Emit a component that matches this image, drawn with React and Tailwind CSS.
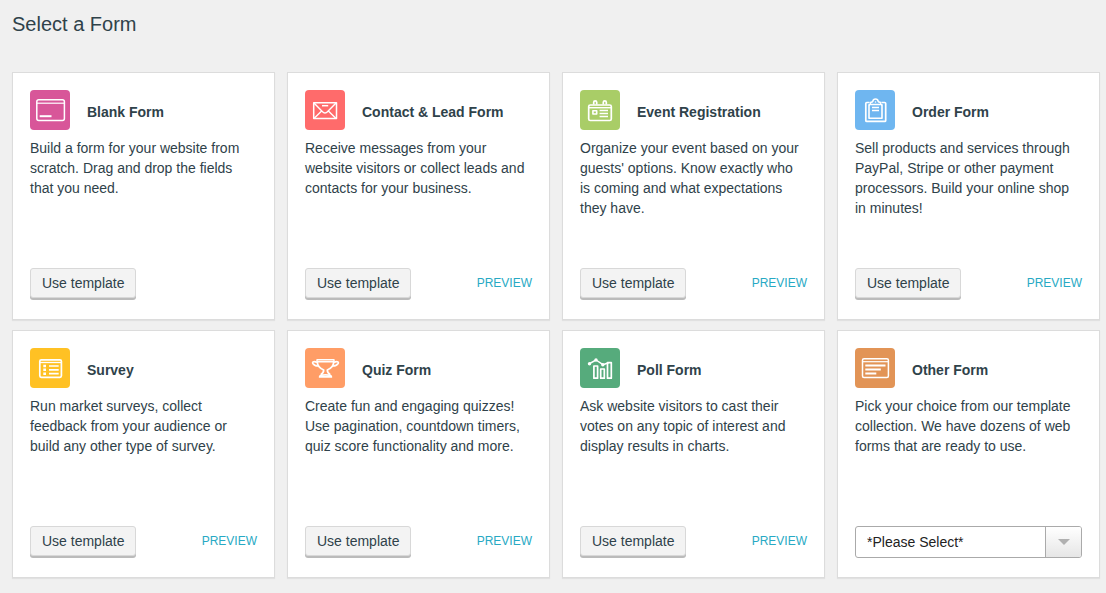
import React from "react";

function Icon({ color, children }) {
  return (
    <svg
      viewBox="0 0 40 40"
      className="size-10 shrink-0"
      fill="none"
      stroke="#fff"
      strokeWidth="1.7"
      strokeLinejoin="round"
      aria-hidden="true"
    >
      <rect width="40" height="40" rx="4" fill={color} stroke="none" />
      {children}
    </svg>
  );
}

const BlankIcon = () => (
  <Icon color="#d85699">
    <rect x="6.8" y="9.8" width="27.6" height="20.6" rx="2" strokeWidth="1.5" />
    <path d="M7 13.2h27" strokeWidth="1.2" />
    <path d="M9.7 26.200h11.800" strokeWidth="2" />
  </Icon>
);

const ContactIcon = () => (
  <Icon color="#ff6b6b">
    <rect x="8.7" y="12.8" width="22.8" height="15.800" strokeWidth="1.500" />
    <path d="M9 13l8.300 8.500c1.700 2 3.700 2 5.400 0L31 13M9 28.400l7.600-7.400M31 28.400l-7.600-7.400" strokeWidth="1.400" />
    <path d="M17 15.700h6.200" strokeWidth="1.500" />
  </Icon>
);

const EventIcon = () => (
  <Icon color="#a9cd67">
    <rect x="8.700" y="15" width="22.600" height="15.500" rx="1.600" />
    <path d="M9 17.700h22" strokeWidth="1.400" />
    <path d="M13.700 14.500v-2.200a1.500 1.500 0 0 1 3 0v2.200M23.300 14.500v-2.200a1.500 1.500 0 0 1 3 0v2.200" />
    <rect x="12.900" y="20.800" width="3.800" height="3.200" strokeWidth="1.600" />
    <path d="M19.600 20.500h8.400M19.600 23.500h8.400M19.600 26.500h8.400" strokeWidth="1.500" />
  </Icon>
);

const OrderIcon = () => (
  <Icon color="#6fb6f0">
    <path d="M14.500 12.500h-2.700a1 1 0 0 0-1 1v16.900a1 1 0 0 0 1 1h17.900a1 1 0 0 0 1-1V13.500a1 1 0 0 0-1-1h-3.200" />
    <path d="M15 14.900h-1v13.300h13V14.900h-1" strokeWidth="1.600" />
    <path d="M15.400 14.500v-2l2.300-.8c.6-3.600 5-3.600 5.600 0l2.300.8v2z" strokeWidth="1.500" />
    <circle cx="20.500" cy="12" r=".8" fill="#fff" stroke="none" />
    <path d="M17 17.600h7M17 20.600h7" strokeWidth="1.500" />
  </Icon>
);

const SurveyIcon = () => (
  <Icon color="#ffc124">
    <rect x="9.800" y="11.800" width="21.600" height="17.500" rx="1.500" />
    <path d="M10 14.500h21" strokeWidth="1.300" />
    <path d="M13.300 18h2.700M13.300 21.800h2.700M13.300 25.700h2.700" strokeWidth="2.400" />
    <path d="M19 18h9.700M19 21.800h9.700M19 25.700h9.700" strokeWidth="1.700" />
  </Icon>
);

const QuizIcon = () => (
  <Icon color="#ff9d66">
    <path d="M12 11.800h17v2H12z" strokeWidth="1.400" />
    <path d="M12.300 13.800c0 4.500 2.700 6.700 6.400 8.200 0 2.200-1 3.600-3 4.800M28.700 13.800c0 4.500-2.700 6.700-6.400 8.200 0 2.200 1 3.600 3 4.800" />
    <path d="M12 14.400c-2.600-1.300-5-.7-4.200 1 1 2 3.200 2.700 5.700 2.600M29 14.400c2.600-1.300 5-.7 4.200 1-1 2-3.200 2.700-5.700 2.600" />
    <path d="M14.600 28.900c0-1.700 2.300-2 5.900-2s5.900.3 5.900 2z" />
  </Icon>
);

const PollIcon = () => (
  <Icon color="#56ab7c">
    <rect x="13.900" y="18" width="3.700" height="12.200" />
    <rect x="20.700" y="21" width="3.600" height="9.200" />
    <rect x="27.500" y="14.600" width="3.800" height="15.600" />
    <path d="M9.500 15.700L16 12l7 4.700 5.500-2" strokeWidth="1.500" />
    <g fill="#fff" stroke="none">
      <circle cx="9.500" cy="15.700" r="1.700" />
      <circle cx="16" cy="12" r="1.700" />
      <circle cx="22.800" cy="16.700" r="1.700" />
    </g>
  </Icon>
);

const OtherIcon = () => (
  <Icon color="#e29456">
    <rect x="7.500" y="10.700" width="25.900" height="18.700" rx="1.500" strokeWidth="1.500" />
    <path d="M8 13.700h25" strokeWidth="1.200" />
    <path d="M10.300 17.500h20.200M10.300 21.500h15.500M10.300 25.500h11" strokeWidth="1.900" />
  </Icon>
);

const forms = [
  { title: "Blank Form", icon: BlankIcon, action: "template", text: "Build a form for your website from scratch. Drag and drop the fields that you need." },
  { title: "Contact & Lead Form", icon: ContactIcon, action: "preview", text: "Receive messages from your website visitors or collect leads and contacts for your business." },
  { title: "Event Registration", icon: EventIcon, action: "preview", text: "Organize your event based on your guests' options. Know exactly who is coming and what expectations they have." },
  { title: "Order Form", icon: OrderIcon, action: "preview", text: "Sell products and services through PayPal, Stripe or other payment processors. Build your online shop in minutes!" },
  { title: "Survey", icon: SurveyIcon, action: "preview", text: "Run market surveys, collect feedback from your audience or build any other type of survey." },
  { title: "Quiz Form", icon: QuizIcon, action: "preview", text: "Create fun and engaging quizzes! Use pagination, countdown timers, quiz score functionality and more." },
  { title: "Poll Form", icon: PollIcon, action: "preview", text: "Ask website visitors to cast their votes on any topic of interest and display results in charts." },
  { title: "Other Form", icon: OtherIcon, action: "select", text: "Pick your choice from our template collection. We have dozens of web forms that are ready to use." },
];

function TemplateSelect() {
  return (
    <div className="mt-auto grid h-8 w-full grid-cols-[1fr_36px] overflow-hidden rounded-[3px] border border-[#aaa] bg-white">
      <select
        aria-label="Template"
        className="col-span-2 col-start-1 row-start-1 h-full w-full appearance-none bg-transparent pl-[11px] text-sm text-[#222]"
      >
        <option>*Please Select*</option>
      </select>
      <span className="pointer-events-none col-start-2 row-start-1 flex items-center justify-center border-l border-[#aaa] bg-linear-to-b from-white to-[#e6e6e6]">
        <svg viewBox="0 0 12 6" className="h-1.5 w-3" aria-hidden="true">
          <path d="M0 0h12L6 6z" fill="#b0b0b0" />
        </svg>
      </span>
    </div>
  );
}

function CardActions({ preview }) {
  return (
    <div className="mt-auto flex items-center justify-between pb-0.5">
      <button
        type="button"
        className="h-[30px] rounded-[3px] border border-[#d8d8d8] bg-[#f3f3f3] px-[11px] text-sm shadow-[0_2px_0_#bbb]"
      >
        Use template
      </button>
      {preview && (
        <a href="#preview" className="text-xs text-[#27a9c4]">
          PREVIEW
        </a>
      )}
    </div>
  );
}

function Card({ form }) {
  const FormIcon = form.icon;
  return (
    <article className="flex min-h-[248px] flex-col border border-[#dcdcdc] bg-white px-[17px] pt-[17px] pb-[19px] shadow-[0_1px_1px_rgba(0,0,0,0.06)]">
      <div className="flex items-center gap-[17px]">
        <FormIcon />
        <h2 className="pt-1 text-sm leading-5 font-bold">{form.title}</h2>
      </div>
      <p className="mt-2 mb-4 pr-1 text-sm leading-5">{form.text}</p>
      {form.action === "select" ? (
        <TemplateSelect />
      ) : (
        <CardActions preview={form.action === "preview"} />
      )}
    </article>
  );
}

export default function App() {
  return (
    <main className="min-h-screen bg-[#f0f0f0] pt-2.5 pr-1.5 pb-[15px] pl-3 font-['Liberation_Sans',Arial,sans-serif] text-[#2f424a]">
      <h1 className="text-xl leading-7">Select a Form</h1>
      <div className="mt-[34px] grid grid-cols-4 gap-x-3 gap-y-2.5">
        {forms.map((form) => (
          <Card key={form.title} form={form} />
        ))}
      </div>
    </main>
  );
}
